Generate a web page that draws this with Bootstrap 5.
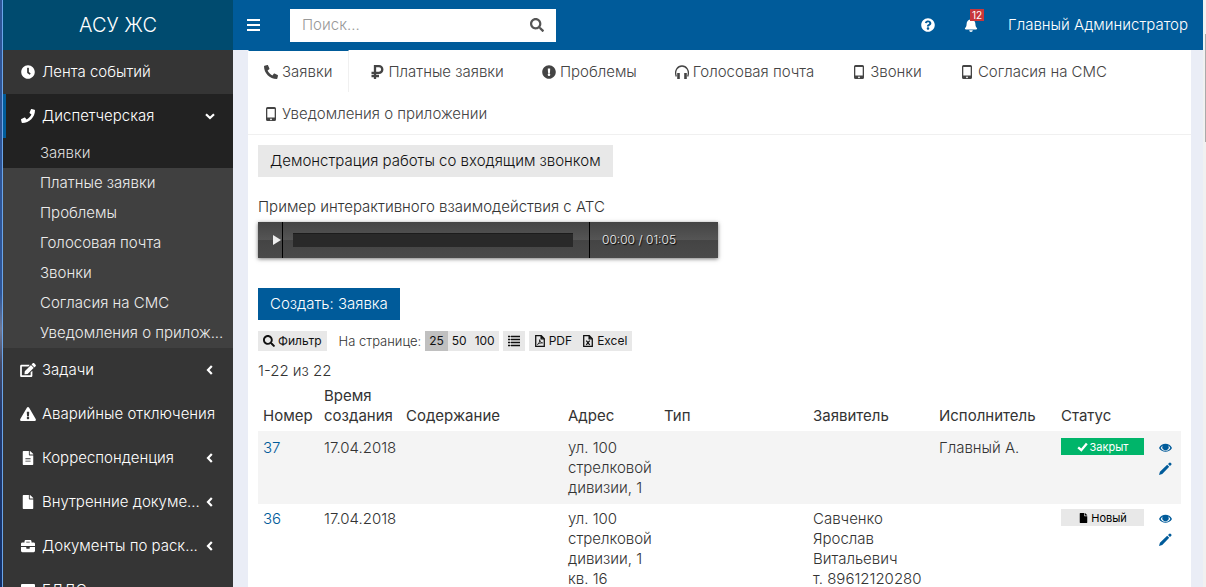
<!DOCTYPE html>
<html lang="ru">
<head>
<meta charset="utf-8">
<meta name="viewport" content="width=device-width, initial-scale=1">
<title>АСУ ЖС</title>
<link href="https://cdn.jsdelivr.net/npm/bootstrap@5.3.0/dist/css/bootstrap.min.css" rel="stylesheet">
<style>
  :root { --brand: #005b9a; --page: #eaedf6; --soft: #e8e8e8; }
  body { font: 300 15px/20px Inter, "Open Sans", sans-serif; color: #333; background: var(--page); }
  a { color: var(--brand); text-decoration: none; }
  .ico { width: 14px; height: 14px; fill: currentColor; flex: none; }
  .edge { width: 3px; border-right: 1px solid #6ba6ea; background: linear-gradient(#2f5596, #2f5596 50%, #6f7894 56%, #454a66 62%, #243a6e 70%, #12306a); }
  .side { width: 230px; background: #353535; }
  .brand { height: 50px; background: #004b6f; color: #fff; font-size: 20px; }
  .side-link { height: 44px; padding: 0 17px 0 14px; border-left: 3px solid transparent; color: #fff; white-space: nowrap; }
  .side-link.current { background: #222; border-color: var(--brand); }
  .side-link .ico { width: 16px; margin-right: 6px; }
  .side-link .arrow { width: 12px; height: 12px; margin: 0 0 0 auto; }
  .sub { background: #404040; }
  .sub a { display: block; height: 30px; line-height: 30px; padding-left: 37px; color: #ececec; white-space: nowrap; }
  .sub a.current { background: #222; color: #ddd; }
  .topbar { height: 50px; background: var(--brand); color: #fff; padding: 0 15px 0 14px; }
  .topbar button, .topbar a { color: #fff; }
  .plain { border: 0; background: none; padding: 0; line-height: 1; }
  .finder { width: 266px; height: 33px; background: #fff; padding: 0 12px; margin-left: 29px; }
  .finder input { border: 0; outline: 0; min-width: 0; font-weight: 300; color: #333; }
  .finder input::placeholder { color: #999; opacity: 1; }
  .topbar .finder button { color: #555; }
  .bell { position: relative; margin: 0 30px 0 29px; }
  .bell .count { position: absolute; left: 6px; top: -9px; background: #c8373c; font-size: 10px; line-height: 12px; padding: 0 2px; font-weight: 400; }
  .work { min-width: 0; }
  .sheet { margin: 0 12px 0 15px; background: #fff; min-height: 100%; }
  .tabs { border-bottom: 1px solid #f0f0f0; column-gap: 5px; }
  .tabs a { height: 42px; padding: 1px 16px 0 15px; color: #444; border: 1px solid transparent; border-bottom: 0; gap: 4px; white-space: nowrap; }
  .tabs a.current { border-right-color: #f0f0f0; border-top-color: var(--brand); }
  .inner { padding: 10px; }
  .flat { border: 0; height: 32px; padding: 0 12px; color: #111; background: var(--soft); font-weight: 300; }
  .flat.main { background: var(--brand); color: #fff; margin-top: 30px; }
  .caption-line { margin: 20px 0 5px; }
  .player { width: 460px; max-width: 100%; height: 36px; color: #eee; background: linear-gradient(#444, #555 50%, #444 51%, #4a4a4a); box-shadow: 0 1px 4px #0008; font-size: 12px; text-shadow: 1px 1px 1px #000; }
  .player button { width: 25px; border-right: 1px solid #000; color: #eee; text-align: right; }
  .player .track { border-right: 1px solid #000; padding: 0 16px 0 10px; width: 307px; }
  .player .rail { height: 14px; background: #292929; border-top: 1px solid #1c1c1c; }
  .tools { font-size: 12px; gap: 4px; margin: 11px 0 10px; }
  .tools button { border: 0; height: 20px; padding: 0 5px; background: var(--soft); color: #111; gap: 3px; line-height: 20px; font-weight: 400; }
  .tools .sizes button { padding: 0 4px; }
  .tools button.current { background: #c0c0c0; }
  .tools .ico { width: 12px; height: 12px; }
  .tools .per { font-size: 13px; margin-left: 8px; }
  .grid { width: 100%; table-layout: fixed; }
  .grid th { font-weight: 400; padding: 5px; vertical-align: bottom; border-bottom: 2px solid #f4f4f4; }
  .grid td { padding: 5px; vertical-align: top; border-top: 1px solid #f4f4f4; }
  .grid tbody tr:nth-child(odd) { background: #f4f4f4; }
  .state { width: 83px; height: 17px; font-size: 11px; font-weight: 400; gap: 2px; }
  .state .ico { width: 11px; height: 10px; }
  .closed { background: #00b56a; color: #fff; }
  .fresh { background: var(--soft); color: #000; }
  .acts { row-gap: 8px; padding-top: 3px; }
  .acts .ico { width: 13px; height: 13px; }
  .scroll { width: 3px; background: #f1f1f1; padding: 34px 0 0 2px; }
  .scroll div { height: 108px; background: #aaa; }
  .c-num { width: 61px } .c-date { width: 82px } .c-addr { width: 96px } .c-type { width: 149px }
  .c-from { width: 126px } .c-to { width: 122px } .c-state { width: 98px } .c-acts { width: 27px }
</style>
</head>
<body>
<svg class="d-none">
  <symbol id="clock" viewBox="0 0 512 512"><path d="M256,8C119,8,8,119,8,256S119,504,256,504,504,393,504,256,393,8,256,8Zm92.49,313h0l-20,25a16,16,0,0,1-22.49,2.5h0l-67-49.72a40,40,0,0,1-15-31.23V112a16,16,0,0,1,16-16h32a16,16,0,0,1,16,16V256l58,42.5A16,16,0,0,1,348.49,321Z"/></symbol>
  <symbol id="phone" viewBox="0 0 512 512"><path d="M493.4 24.6l-104-24c-11.3-2.6-22.9 3.3-27.5 13.9l-48 112c-4.2 9.8-1.4 21.3 6.9 28l60.6 49.6c-36 76.7-98.9 140.5-177.2 177.2l-49.6-60.6c-6.8-8.3-18.2-11.1-28-6.9l-112 48C3.9 366.5-2 378.1.6 389.4l24 104C27.1 504.2 36.7 512 48 512c256.1 0 464-207.5 464-464 0-11.2-7.7-20.9-18.6-23.4z"/></symbol>
  <symbol id="handset" viewBox="0 0 512 512"><path transform="matrix(-1 0 0 1 512 0)" d="M493.4 24.6l-104-24c-11.3-2.6-22.9 3.3-27.5 13.9l-48 112c-4.2 9.8-1.4 21.3 6.9 28l60.6 49.6c-36 76.7-98.9 140.5-177.2 177.2l-49.6-60.6c-6.8-8.3-18.2-11.1-28-6.9l-112 48C3.9 366.5-2 378.1.6 389.4l24 104C27.1 504.2 36.7 512 48 512c256.1 0 464-207.5 464-464 0-11.2-7.7-20.9-18.6-23.4z"/></symbol>
  <symbol id="edit" viewBox="0 0 576 512"><path d="M402.6 83.2l90.2 90.2c3.8 3.8 3.8 10 0 13.8L274.4 405.6l-92.8 10.3c-12.4 1.4-22.9-9.1-21.5-21.5l10.3-92.8L388.8 83.2c3.8-3.8 10-3.8 13.8 0zm162-22.9l-48.8-48.8c-15.2-15.2-39.9-15.2-55.2 0l-35.4 35.4c-3.8 3.8-3.8 10 0 13.8l90.2 90.2c3.8 3.8 10 3.8 13.8 0l35.4-35.4c15.2-15.3 15.2-40 0-55.2zM384 346.2V448H64V128h229.8c3.2 0 6.2-1.3 8.5-3.5l40-40c7.6-7.6 2.2-20.5-8.5-20.5H48C21.5 64 0 85.5 0 112v352c0 26.5 21.5 48 48 48h352c26.5 0 48-21.5 48-48V306.2c0-10.7-12.9-16-20.5-8.5l-40 40c-2.2 2.3-3.5 5.3-3.5 8.5z"/></symbol>
  <symbol id="warn" viewBox="0 0 576 512"><path d="M569.517 440.013C587.975 472.007 564.806 512 527.94 512H48.054c-36.937 0-59.999-40.055-41.577-71.987L246.423 23.985c18.467-32.009 64.72-31.951 83.154 0l239.94 416.028zM288 354c-25.405 0-46 20.595-46 46s20.595 46 46 46 46-20.595 46-46-20.595-46-46-46zm-43.673-165.346l7.418 136c.347 6.364 5.609 11.346 11.982 11.346h48.546c6.373 0 11.635-4.982 11.982-11.346l7.418-136c.375-6.874-5.098-12.654-11.982-12.654h-63.383c-6.884 0-12.356 5.78-11.981 12.654z"/></symbol>
  <symbol id="doc" viewBox="0 0 384 512"><path d="M224 136V0H24C10.7 0 0 10.7 0 24v464c0 13.3 10.7 24 24 24h336c13.3 0 24-10.7 24-24V160H248c-13.2 0-24-10.8-24-24zm64 236c0 6.6-5.4 12-12 12H108c-6.6 0-12-5.4-12-12v-8c0-6.600 5.400-12 12-12h168c6.600 0 12 5.400 12 12v8zm0-84c0 6.600-5.400 12-12 12H108c-6.600 0-12-5.400-12-12v-8c0-6.600 5.400-12 12-12h168c6.600 0 12 5.400 12 12v8zm96-166.100v6.100H256V0h6.100c6.400 0 12.500 2.500 17 7l97.900 98c4.500 4.500 7 10.600 7 16.900z"/></symbol>
  <symbol id="file" viewBox="0 0 384 512"><path d="M224 136V0H24C10.7 0 0 10.7 0 24v464c0 13.3 10.7 24 24 24h336c13.3 0 24-10.7 24-24V160H248c-13.2 0-24-10.8-24-24zm160-14.1v6.1H256V0h6.1c6.4 0 12.5 2.5 17 7l97.9 98c4.5 4.5 7 10.6 7 16.9z"/></symbol>
  <symbol id="case" viewBox="0 0 512 512"><path d="M320 336c0 8.84-7.16 16-16 16h-96c-8.84 0-16-7.16-16-16v-48H0v144c0 25.6 22.4 48 48 48h416c25.6 0 48-22.4 48-48V288H320v48zm144-208h-80V80c0-25.6-22.4-48-48-48H176c-25.6 0-48 22.4-48 48v48H48c-25.6 0-48 22.4-48 48v80h512v-80c0-25.6-22.4-48-48-48zm-144 0H192V96h128v32z"/></symbol>
  <symbol id="box" viewBox="0 0 14 14"><rect y="1" width="14" height="12" rx="1"/></symbol>
  <symbol id="left" viewBox="0 0 12 12"><path d="M7.800 2 4 6l3.800 4" fill="none" stroke="currentColor" stroke-width="2.200"/></symbol>
  <symbol id="down" viewBox="0 0 12 12"><path d="M2 4.200 6 8l4-3.800" fill="none" stroke="currentColor" stroke-width="2.200"/></symbol>
  <symbol id="search" viewBox="0 0 512 512"><path d="M505 442.7L405.3 343c-4.5-4.5-10.6-7-17-7H372c27.6-35.3 44-79.7 44-128C416 93.1 322.9 0 208 0S0 93.1 0 208s93.1 208 208 208c48.3 0 92.7-16.4 128-44v16.3c0 6.4 2.5 12.5 7 17l99.7 99.7c9.4 9.4 24.6 9.4 33.9 0l28.3-28.3c9.4-9.4 9.4-24.6.1-34zM208 336c-70.7 0-128-57.2-128-128 0-70.7 57.2-128 128-128 70.7 0 128 57.2 128 128 0 70.7-57.2 128-128 128z"/></symbol>
  <symbol id="help" viewBox="0 0 512 512"><path d="M504 256c0 136.997-111.043 248-248 248S8 392.997 8 256C8 119.083 119.043 8 256 8s248 111.083 248 248zM262.655 90c-54.497 0-89.255 22.957-116.549 63.758-3.536 5.286-2.353 12.415 2.715 16.258l34.699 26.31c5.205 3.947 12.621 3.008 16.665-2.122 17.864-22.658 30.113-35.797 57.303-35.797 20.429 0 45.698 13.148 45.698 32.958 0 14.976-12.363 22.667-32.534 33.976C247.128 238.528 216 254.941 216 296v4c0 6.627 5.373 12 12 12h56c6.627 0 12-5.373 12-12v-1.333c0-28.462 83.186-29.647 83.186-106.667 0-58.002-60.165-102-116.531-102zM256 338c-25.365 0-46 20.635-46 46 0 25.364 20.635 46 46 46s46-20.636 46-46c0-25.365-20.635-46-46-46z"/></symbol>
  <symbol id="bell" viewBox="0 0 448 512"><path d="M224 512c35.32 0 63.97-28.65 63.97-64H160.03c0 35.35 28.65 64 63.97 64zm215.39-149.71c-19.32-20.76-55.47-51.99-55.47-154.29 0-77.7-54.48-139.9-127.94-155.16V32c0-17.67-14.32-32-31.98-32s-31.98 14.33-31.98 32v20.84C118.56 68.1 64.08 130.3 64.08 208c0 102.3-36.15 133.53-55.47 154.29-6 6.45-8.66 14.16-8.61 21.71.11 16.4 12.98 32 32.1 32h383.8c19.12 0 32-15.6 32.1-32 .05-7.55-2.61-15.27-8.61-21.71z"/></symbol>
  <symbol id="alert" viewBox="0 0 512 512"><path d="M504 256c0 136.997-111.043 248-248 248S8 392.997 8 256C8 119.083 119.043 8 256 8s248 111.083 248 248zm-248 50c-25.405 0-46 20.595-46 46s20.595 46 46 46 46-20.595 46-46-20.595-46-46-46zm-43.673-165.346l7.418 136c.347 6.364 5.609 11.346 11.982 11.346h48.546c6.373 0 11.635-4.982 11.982-11.346l7.418-136c.375-6.874-5.098-12.654-11.982-12.654h-63.383c-6.884 0-12.356 5.78-11.981 12.654z"/></symbol>
  <symbol id="ruble" viewBox="0 0 14 14"><path d="M5 14V1.200h4a3.200 3.200 0 0 1 0 6.600H1.500M1.500 11H9" fill="none" stroke="currentColor" stroke-width="2.300"/></symbol>
  <symbol id="phones" viewBox="0 0 14 14"><path d="M1.300 11.500C-1 5 3 1 7 1s8 4 5.700 10.500" fill="none" stroke="currentColor" stroke-width="1.300"/><path d="M2.200 8h2.600v6H2.200zM9.200 8h2.600v6H9.200z"/></symbol>
  <symbol id="mobile" viewBox="0 0 14 14"><path fill-rule="evenodd" d="M3.500 0h7A1.500 1.500 0 0 1 12 1.500v11a1.500 1.500 0 0 1-1.500 1.500h-7A1.500 1.500 0 0 1 2 12.500v-11A1.500 1.500 0 0 1 3.500 0zM3.300 2v8.500h7.400V2zM7 11.400a.9.900 0 1 0 0 1.800.9.900 0 0 0 0-1.800z"/></symbol>
  <symbol id="bars" viewBox="0 0 14 14"><path d="M0 1h13v2H0zM0 6h13v2H0zM0 11h13v2H0z"/></symbol>
  <symbol id="list" viewBox="0 0 12 12"><path d="M0 1h2v1H0zM3 1h9v1H3zM0 4h2v1H0zM3 4h9v1H3zM0 7h2v1H0zM3 7h9v1H3zM0 10h2v1H0zM3 10h9v1H3z" stroke="currentColor" stroke-width=".5"/></symbol>
  <symbol id="pdf" viewBox="0 0 12 14"><path d="M1 .8h6.500L11 4.300v8.900H1zM7.300.8v3.700H11" fill="none" stroke="currentColor" stroke-width="1.500"/><path d="M3 11c2-1 3-4 2.500-5.500C6 8 7 9 9 9.200 7 9 4.500 9.700 3 11z" fill="none" stroke="currentColor"/></symbol>
  <symbol id="excel" viewBox="0 0 12 14"><path d="M1 .8h6.500L11 4.300v8.900H1zM7.300.8v3.700H11" fill="none" stroke="currentColor" stroke-width="1.500"/><path d="m4 6.500 4 5m0-5-4 5" fill="none" stroke="currentColor" stroke-width="1.500"/></symbol>
  <symbol id="check" viewBox="0 0 14 12"><path d="m1.500 6.500 4 3.500 7-8.500" fill="none" stroke="currentColor" stroke-width="3"/></symbol>
  <symbol id="eye" viewBox="0 0 14 14"><path fill-rule="evenodd" d="M0 7.500C3 1.500 11 1.500 14 7.500 11 13 3 13 0 7.500zM1.800 7.500c1.200 2 3 3.300 5.200 3.300s4-1.300 5.200-3.300C11.500 6 10.500 5 9.800 4.800a3.400 3.400 0 1 1-5.600 0C3.200 5.300 2.500 6.200 1.800 7.500z"/></symbol>
  <symbol id="pencil" viewBox="0 0 14 14"><path d="m0 14 1-3.600L8.800 3 11 5.200 3.500 13zM9.700 2.200 11.200.8q.6-.5 1.200 0l.9.900q.5.600 0 1.200l-1.500 1.500z"/></symbol>
</svg>

<div class="d-flex vh-100 overflow-hidden">
  <div class="edge flex-shrink-0"></div>
  <aside class="side flex-shrink-0">
    <a href="#" class="brand d-flex align-items-center justify-content-center">АСУ ЖС</a>
    <nav>
      <a href="#" class="side-link d-flex align-items-center"><svg class="ico"><use href="#clock"/></svg><span>Лента событий</span></a>
      <a href="#" class="side-link current d-flex align-items-center"><svg class="ico"><use href="#phone"/></svg><span>Диспетчерская</span><svg class="ico arrow"><use href="#down"/></svg></a>
      <div class="sub">
        <a href="#" class="current">Заявки</a>
        <a href="#">Платные заявки</a>
        <a href="#">Проблемы</a>
        <a href="#">Голосовая почта</a>
        <a href="#">Звонки</a>
        <a href="#">Согласия на СМС</a>
        <a href="#">Уведомления о прилож...</a>
      </div>
      <a href="#" class="side-link d-flex align-items-center"><svg class="ico"><use href="#edit"/></svg><span>Задачи</span><svg class="ico arrow"><use href="#left"/></svg></a>
      <a href="#" class="side-link d-flex align-items-center"><svg class="ico"><use href="#warn"/></svg><span>Аварийные отключения</span></a>
      <a href="#" class="side-link d-flex align-items-center"><svg class="ico"><use href="#doc"/></svg><span>Корреспонденция</span><svg class="ico arrow"><use href="#left"/></svg></a>
      <a href="#" class="side-link d-flex align-items-center"><svg class="ico"><use href="#file"/></svg><span>Внутренние докуме...</span><svg class="ico arrow"><use href="#left"/></svg></a>
      <a href="#" class="side-link d-flex align-items-center"><svg class="ico"><use href="#case"/></svg><span>Документы по раск...</span><svg class="ico arrow"><use href="#left"/></svg></a>
      <a href="#" class="side-link d-flex align-items-center"><svg class="ico"><use href="#box"/></svg><span>ЕДДС</span></a>
    </nav>
  </aside>

  <div class="work flex-grow-1">
    <header class="topbar d-flex align-items-center">
      <button class="plain d-flex" aria-label="Меню"><svg class="ico"><use href="#bars"/></svg></button>
      <form class="finder d-flex align-items-center">
        <input class="flex-grow-1 p-0" type="text" placeholder="Поиск..." aria-label="Поиск">
        <button type="button" class="plain d-flex" aria-label="Найти"><svg class="ico"><use href="#search"/></svg></button>
      </form>
      <a href="#" class="ms-auto d-flex" aria-label="Справка"><svg class="ico"><use href="#help"/></svg></a>
      <a href="#" class="bell d-flex" aria-label="Уведомления"><svg class="ico"><use href="#bell"/></svg><span class="count">12</span></a>
      <a href="#">Главный Администратор</a>
    </header>

    <main class="sheet">
      <nav class="tabs d-flex flex-wrap">
        <a href="#" class="current d-flex align-items-center"><svg class="ico"><use href="#handset"/></svg>Заявки</a>
        <a href="#" class="d-flex align-items-center"><svg class="ico"><use href="#ruble"/></svg>Платные заявки</a>
        <a href="#" class="d-flex align-items-center"><svg class="ico"><use href="#alert"/></svg>Проблемы</a>
        <a href="#" class="d-flex align-items-center"><svg class="ico"><use href="#phones"/></svg>Голосовая почта</a>
        <a href="#" class="d-flex align-items-center"><svg class="ico"><use href="#mobile"/></svg>Звонки</a>
        <a href="#" class="d-flex align-items-center"><svg class="ico"><use href="#mobile"/></svg>Согласия на СМС</a>
        <a href="#" class="d-flex align-items-center"><svg class="ico"><use href="#mobile"/></svg>Уведомления о приложении</a>
      </nav>
      <div class="inner">
        <button class="flat d-block">Демонстрация работы со входящим звонком</button>
        <div class="caption-line">Пример интерактивного взаимодействия с АТС</div>
        <div class="player d-flex">
          <button class="plain" aria-label="Воспроизвести"><svg class="ico" viewBox="0 0 14 14"><path d="M5 2v10l8-5z"/></svg></button>
          <div class="track d-flex align-items-center"><div class="rail flex-grow-1"></div></div>
          <div class="d-flex align-items-center ms-2 ps-1">00:00 / 01:05</div>
        </div>
        <button class="flat main d-block">Создать: Заявка</button>
        <div class="tools d-flex align-items-center">
          <button class="d-flex align-items-center"><svg class="ico"><use href="#search"/></svg>Фильтр</button>
          <span class="per">На странице:</span>
          <div class="sizes d-flex"><button class="current">25</button><button>50</button><button>100</button></div>
          <button class="d-flex align-items-center" aria-label="Список"><svg class="ico"><use href="#list"/></svg></button>
          <div class="d-flex"><button class="d-flex align-items-center"><svg class="ico"><use href="#pdf"/></svg>PDF</button><button class="d-flex align-items-center"><svg class="ico"><use href="#excel"/></svg>Excel</button></div>
        </div>
        <div>1-22 из 22</div>
        <table class="grid">
          <colgroup><col class="c-num"><col class="c-date"><col><col class="c-addr"><col class="c-type"><col class="c-from"><col class="c-to"><col class="c-state"><col class="c-acts"></colgroup>
          <thead><tr><th>Номер</th><th>Время создания</th><th>Содержание</th><th>Адрес</th><th>Тип</th><th>Заявитель</th><th>Исполнитель</th><th>Статус</th><th></th></tr></thead>
          <tbody>
            <tr><td><a href="#">37</a></td><td>17.04.2018</td><td></td><td>ул. 100 стрелковой дивизии, 1</td><td></td><td></td><td>Главный А.</td>
              <td><div class="state closed d-flex align-items-center justify-content-center"><svg class="ico"><use href="#check"/></svg>Закрыт</div></td>
              <td><div class="acts d-flex flex-column"><a href="#" class="d-flex" aria-label="Просмотр"><svg class="ico"><use href="#eye"/></svg></a><a href="#" class="d-flex" aria-label="Изменить"><svg class="ico"><use href="#pencil"/></svg></a></div></td></tr>
            <tr><td><a href="#">36</a></td><td>17.04.2018</td><td></td><td>ул. 100 стрелковой дивизии, 1 кв. 16</td><td></td><td>Савченко Ярослав Витальевич<br>т. 89612120280</td><td></td>
              <td><div class="state fresh d-flex align-items-center justify-content-center"><svg class="ico"><use href="#file"/></svg>Новый</div></td>
              <td><div class="acts d-flex flex-column"><a href="#" class="d-flex" aria-label="Просмотр"><svg class="ico"><use href="#eye"/></svg></a><a href="#" class="d-flex" aria-label="Изменить"><svg class="ico"><use href="#pencil"/></svg></a></div></td></tr>
          </tbody>
        </table>
      </div>
    </main>
  </div>
  <div class="scroll flex-shrink-0"><div></div></div>
</div>
<script src="https://cdn.jsdelivr.net/npm/bootstrap@5.3.0/dist/js/bootstrap.bundle.min.js"></script>
</body>
</html>
